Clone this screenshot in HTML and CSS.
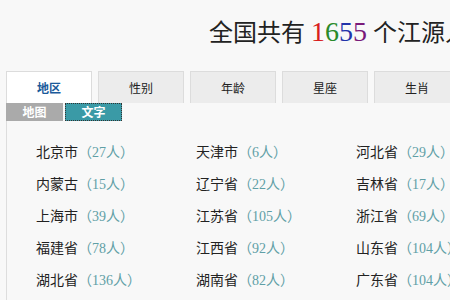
FILE: index.html
```html
<!DOCTYPE html>
<html lang="zh-CN">
<head>
    <meta charset="UTF-8">
    <title>江源</title>
    <link rel="stylesheet" href="styles.css">
</head>
<body>
    <div class="header">
        <h1 class="title">全国共有 <span class="n1">1</span><span class="n2">6</span><span class="n3">5</span><span class="n4">5</span> 个江源人</h1>
    </div>

    <div class="tabs">
        <div class="tab active">地区</div>
        <div class="tab">性别</div>
        <div class="tab">年龄</div>
        <div class="tab">星座</div>
        <div class="tab">生肖</div>
    </div>

    <div class="subtabs">
        <div class="subtab">地图</div>
        <div class="subtab current">文字</div>
    </div>

    <div class="panel">
        <div class="item">北京市<span class="count">（27人）</span></div>
        <div class="item">天津市<span class="count">（6人）</span></div>
        <div class="item">河北省<span class="count">（29人）</span></div>
        <div class="item">内蒙古<span class="count">（15人）</span></div>
        <div class="item">辽宁省<span class="count">（22人）</span></div>
        <div class="item">吉林省<span class="count">（17人）</span></div>
        <div class="item">上海市<span class="count">（39人）</span></div>
        <div class="item">江苏省<span class="count">（105人）</span></div>
        <div class="item">浙江省<span class="count">（69人）</span></div>
        <div class="item">福建省<span class="count">（78人）</span></div>
        <div class="item">江西省<span class="count">（92人）</span></div>
        <div class="item">山东省<span class="count">（104人）</span></div>
        <div class="item">湖北省<span class="count">（136人）</span></div>
        <div class="item">湖南省<span class="count">（82人）</span></div>
        <div class="item">广东省<span class="count">（104人）</span></div>
    </div>
</body>
</html>
```

FILE: styles.css
```css
/* General */
body {
    margin: 0;
    background: #f8f8f8;
    font-family: "Noto Sans CJK SC", sans-serif;
    color: #222;
    overflow: hidden;
    width: 450px;
}

/* Header */
.header {
    height: 65px;
    padding-left: 209px;
    white-space: nowrap;
}

.title {
    margin: 0;
    padding-top: 14px;
    font-family: "Liberation Serif", "Noto Sans CJK SC", serif;
    font-size: 24px;
    font-weight: normal;
    line-height: 36px;
    color: #222;
}

.n1 { color: #d81e1e; font-size: 28px; }
.n2 { color: #2a8a2a; font-size: 28px; }
.n3 { color: #2233aa; font-size: 28px; }
.n4 { color: #7a1a7a; font-size: 28px; }

/* Tabs */
.tabs {
    display: flex;
    gap: 6px;
    padding-left: 6px;
    margin-top: 6px;
}

.tab {
    flex: none;
    width: 84px;
    height: 31px;
    line-height: 31px;
    text-align: center;
    font-size: 12px;
    background: #ececec;
    border: 1px solid #dcdcdc;
    border-bottom: none;
    color: #222;
}

.tab.active {
    background: #fff;
    color: #1a5a9a;
    font-weight: bold;
}

/* Sub tabs */
.subtabs {
    display: flex;
    gap: 2px;
    padding-left: 6px;
}

.subtab {
    width: 57px;
    height: 18px;
    line-height: 18px;
    text-align: center;
    font-size: 12px;
    font-weight: bold;
    color: #fff;
    background: #aaa;
}

.subtab.current {
    background: #3a9aa6;
    outline: 1px dotted #333;
    outline-offset: -1px;
}

/* List */
.panel {
    margin-left: 6px;
    border-left: 1px solid #ddd;
    padding: 18px 0 0 29px;
    display: grid;
    grid-template-columns: 160px 160px 160px;
    grid-auto-rows: 32px;
    height: 200px;
}

.item {
    font-size: 14px;
    line-height: 24px;
    white-space: nowrap;
    color: #222;
}

.count {
    font-family: "Liberation Serif", "Noto Sans CJK SC", serif;
    color: #5f9fa6;
}
```
